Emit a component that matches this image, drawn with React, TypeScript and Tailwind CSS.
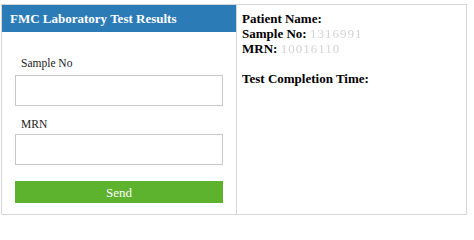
export default function App() {
  const serif = { fontFamily: '"Liberation Serif", "Times New Roman", serif' };
  return (
    <div className="w-[474px] h-[217px] bg-white pt-[4px] pl-[1px]" style={serif}>
      <div className="flex w-[466px] h-[211px] border border-[#d6d6d6]">
        {/* form panel */}
        <div className="w-[235px] shrink-0 border-r border-[#d6d6d6] flex flex-col">
          <div className="h-[27px] bg-[#2b7bb7] flex items-center pl-[8px]">
            <span className="text-white font-bold text-[13px] leading-none">FMC Laboratory Test Results</span>
          </div>
          <div className="flex flex-col px-[13px]">
            <label className="mt-[24px] pl-[6px] text-[11.5px] leading-[14px] text-[#222]">Sample No</label>
            <input className="mt-[5px] h-[31px] w-[208px] border border-[#c8c8c8] outline-none" />
            <label className="mt-[11px] pl-[6px] text-[11.5px] leading-[14px] text-[#222]">MRN</label>
            <input className="mt-[3px] h-[31px] w-[208px] border border-[#c8c8c8] outline-none" />
            <button className="mt-[16px] h-[22px] w-[208px] bg-[#5db22e] text-white text-[13px] leading-none flex items-center justify-center">
              Send
            </button>
          </div>
        </div>
        {/* result panel */}
        <div className="flex-1 pl-[5px] pt-[6px] text-[13px] leading-[15px] font-bold text-black">
          <div>Patient Name:</div>
          <div>
            Sample No: <span className="font-normal text-[#d4d4d4] tracking-[1px] blur-[0.5px]">1316991</span>
          </div>
          <div>
            MRN: <span className="font-normal text-[#d4d4d4] tracking-[1px] blur-[0.5px]">10016110</span>
          </div>
          <div className="h-[15px]" />
          <div>Test Completion Time:</div>
        </div>
      </div>
    </div>
  );
}
